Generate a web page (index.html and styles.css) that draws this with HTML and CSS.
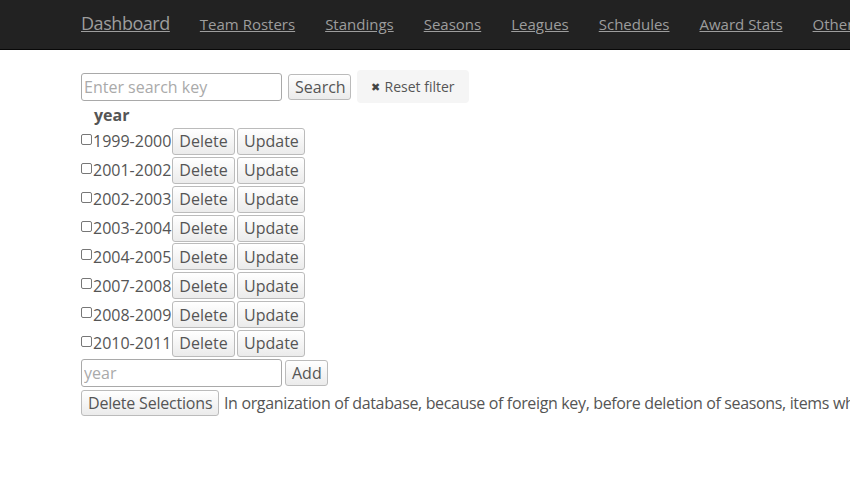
FILE: index.html
```html
<!DOCTYPE html>
<html>
<head>
<meta charset="utf-8">
<link rel="stylesheet" href="styles.css">
</head>
<body>
<nav class="navbar">
  <a class="brand" href="#">Dashboard</a>
  <a class="nav-link" href="#">Team Rosters</a>
  <a class="nav-link" href="#">Standings</a>
  <a class="nav-link" href="#">Seasons</a>
  <a class="nav-link" href="#">Leagues</a>
  <a class="nav-link" href="#">Schedules</a>
  <a class="nav-link" href="#">Award Stats</a>
  <a class="nav-link" href="#">Others</a>
</nav>
<main class="content">
  <div class="search-row">
    <input class="text-input" type="text" placeholder="Enter search key">
    <button class="btn btn-search">Search</button>
    <span class="reset"><span class="reset-x">✖</span> Reset filter</span>
  </div>
  <div class="col-head">year</div>
  <div class="rows">
    <div class="row"><span class="cb"></span><span class="yr">1999-2000</span><button class="btn btn-del">Delete</button><button class="btn btn-upd">Update</button></div>
    <div class="row"><span class="cb"></span><span class="yr">2001-2002</span><button class="btn btn-del">Delete</button><button class="btn btn-upd">Update</button></div>
    <div class="row"><span class="cb"></span><span class="yr">2002-2003</span><button class="btn btn-del">Delete</button><button class="btn btn-upd">Update</button></div>
    <div class="row"><span class="cb"></span><span class="yr">2003-2004</span><button class="btn btn-del">Delete</button><button class="btn btn-upd">Update</button></div>
    <div class="row"><span class="cb"></span><span class="yr">2004-2005</span><button class="btn btn-del">Delete</button><button class="btn btn-upd">Update</button></div>
    <div class="row"><span class="cb"></span><span class="yr">2007-2008</span><button class="btn btn-del">Delete</button><button class="btn btn-upd">Update</button></div>
    <div class="row"><span class="cb"></span><span class="yr">2008-2009</span><button class="btn btn-del">Delete</button><button class="btn btn-upd">Update</button></div>
    <div class="row"><span class="cb"></span><span class="yr">2010-2011</span><button class="btn btn-del">Delete</button><button class="btn btn-upd">Update</button></div>
  </div>
  <div class="add-row">
    <input class="text-input" type="text" placeholder="year">
    <button class="btn btn-add">Add</button>
  </div>
  <div class="del-row">
    <button class="btn btn-delsel">Delete Selections</button>
    <span class="note">In organization of database, because of foreign key, before deletion of seasons, items which refer to the seasons must be deleted.</span>
  </div>
</main>
</body>
</html>
```
FILE: styles.css
```css
html, body {
  margin: 0;
  padding: 0;
  background: #fff;
  font-family: "Open Sans", "Noto Sans", sans-serif;
  color: #555;
  overflow: hidden;
}
.navbar {
  height: 49px;
  background: #222;
  border-bottom: 1px solid #080808;
  display: flex;
  align-items: center;
  padding-left: 81px;
  white-space: nowrap;
  gap: 30px;
}
.navbar a {
  color: #9d9d9d;
  text-decoration: underline;
}
.brand {
  font-size: 18px;
  letter-spacing: -0.45px;
  margin-top: -4px;
}
.nav-link {
  font-size: 15px;
  margin-top: -1px;
}
.content {
  padding-left: 81px;
  padding-top: 20px;
}
.search-row {
  display: flex;
  align-items: center;
  height: 33px;
}
.text-input {
  box-sizing: border-box;
  width: 201px;
  height: 28px;
  border: 1px solid #a9a9a9;
  border-radius: 3px;
  padding: 0 2px;
  font-family: inherit;
  font-size: 16px;
  color: #555;
  margin: 0;
}
.text-input::placeholder {
  color: #aaa;
}
.btn {
  box-sizing: border-box;
  height: 27px;
  font-family: inherit;
  font-size: 16px;
  color: #555;
  border: 1px solid #bbb;
  border-radius: 3px;
  background: linear-gradient(#fff, #ebebeb);
  padding: 0 6px;
  margin: 0;
  line-height: 1;
  white-space: nowrap;
}
.btn-search {
  margin-left: 6px;
  height: 26px;
  width: 63px;
}
.reset {
  margin-left: 6px;
  height: 33px;
  width: 112px;
  box-sizing: border-box;
  background: #f5f5f5;
  border-radius: 4px;
  display: flex;
  align-items: center;
  justify-content: center;
  font-size: 14px;
  color: #555;
}
.reset-x {
  font-size: 11px;
  margin-right: 4px;
  color: #444;
}
.col-head {
  font-weight: bold;
  font-size: 16px;
  padding-left: 13px;
  margin-top: 1px;
  height: 23px;
  line-height: 22px;
}
.rows {
  display: flex;
  flex-direction: column;
}
.row {
  display: flex;
  align-items: center;
  height: 28.86px;
}
.cb {
  box-sizing: border-box;
  width: 11px;
  height: 11px;
  border: 1px solid #777;
  border-radius: 2px;
  background: #fff;
  margin-right: 1px;
  margin-top: -4px;
}
.yr {
  font-size: 16px;
  width: 79px;
}
.btn-del {
  width: 63px;
  margin-left: 0;
}
.btn-upd {
  width: 68px;
  margin-left: 2px;
}
.add-row {
  display: flex;
  align-items: center;
  height: 31px;
  margin-top: 0;
}
.btn-add {
  margin-left: 3px;
  width: 43px;
  height: 26px;
}
.del-row {
  display: flex;
  align-items: center;
  height: 28px;
  white-space: nowrap;
}
.btn-delsel {
  width: 138px;
  height: 26px;
  letter-spacing: -0.2px;
}
.note {
  font-size: 16px;
  letter-spacing: -0.35px;
  margin-left: 5px;
}
```
